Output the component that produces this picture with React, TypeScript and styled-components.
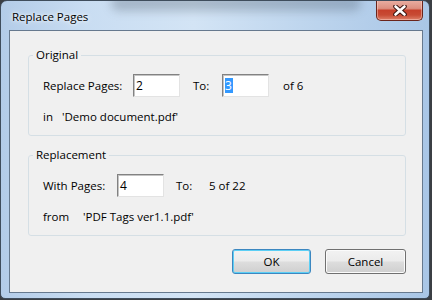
import React from "react";
import styled, { createGlobalStyle } from "styled-components";

const Global = createGlobalStyle`
  html, body { margin: 0; padding: 0; }
  body {
    background: #3b3f44;
    font-family: "Open Sans", "Noto Sans", sans-serif;
    font-size: 11px;
    color: #000;
  }
`;

const Window = styled.div`
  position: relative;
  box-sizing: border-box;
  width: 430px;
  height: 299px;
  border: 1px solid #3f4d5c;
  border-radius: 7px 7px 5px 5px;
  overflow: hidden;
  background: linear-gradient(
    to right,
    #b3cce8 0%,
    #c9ddf2 20%,
    #d3e4f5 45%,
    #bfd6ee 70%,
    #a9c6e6 100%
  );
  padding: 0 6px 5px 8px;
  display: flex;
  flex-direction: column;
`;

const GlassShade = styled.div`
  position: absolute;
  left: 110px;
  top: -6px;
  width: 250px;
  height: 16px;
  border-radius: 8px;
  background: rgba(60, 74, 90, 0.28);
  filter: blur(5px);
  pointer-events: none;
`;

const TitleBar = styled.div`
  position: relative;
  height: 29px;
  display: flex;
  align-items: flex-start;
`;

const TitleText = styled.div`
  margin: 9px 0 0 3px;
  font-size: 11.5px;
  line-height: 14px;
  color: #000;
  text-shadow: 0 0 6px rgba(255, 255, 255, 0.9), 0 0 3px rgba(255, 255, 255, 0.9);
`;

const CloseButton = styled.div`
  margin-left: auto;
  margin-top: -1px;
  box-sizing: border-box;
  width: 47px;
  height: 21px;
  border: 1px solid #6a241b;
  border-top: none;
  border-radius: 0 0 5px 5px;
  background: linear-gradient(
    #eab0a4 0%,
    #dc8f80 42%,
    #c6402b 52%,
    #c84b34 75%,
    #de8069 100%
  );
  box-shadow: inset 0 0 0 1px rgba(255, 220, 210, 0.45);
  display: flex;
  align-items: center;
  justify-content: center;
`;

const Client = styled.div`
  flex: 1;
  border: 1px solid #66798e;
  background: #f0f0f0;
  padding: 16px 0 0 18px;
  display: flex;
  flex-direction: column;
`;

const Group = styled.fieldset<{ $gap?: number }>`
  box-sizing: border-box;
  width: 378px;
  margin: ${(p) => p.$gap ?? 0}px 0 0 0;
  padding: 0;
  min-width: 0;
  border: 1px solid #d5dfe5;
  border-radius: 3px;
`;

const Legend = styled.legend`
  padding: 0 3px;
  margin-left: 4px;
  font-size: 11.5px;
  line-height: 16px;
  color: #000;
`;

const GroupBody = styled.div`
  padding: 11px 0 10px 14px;
`;

const FieldRow = styled.div`
  display: flex;
  align-items: center;
  height: 23px;
`;

const InfoRow = styled.div`
  display: flex;
  align-items: center;
  margin-top: 12px;
  line-height: 16px;
  height: 16px;
`;

const Label = styled.span<{ $w: number }>`
  width: ${(p) => p.$w}px;
  flex: none;
  font-size: 11.5px;
  white-space: nowrap;
`;

const Text = styled.span`
  font-size: 11.5px;
  white-space: nowrap;
`;

const Field = styled.div<{ $after: number }>`
  box-sizing: border-box;
  width: 47px;
  height: 23px;
  flex: none;
  margin-right: ${(p) => p.$after}px;
  background: #fff;
  border: 1px solid;
  border-color: #828282 #e3e3e3 #e3e3e3 #828282;
  box-shadow: inset 1px 1px 0 #c4c4c4;
  padding: 0 0 0 2px;
  display: flex;
  align-items: center;
  font-size: 12px;
`;

const Selected = styled.span`
  background: #3399ff;
  color: #fff;
  line-height: 15px;
  padding: 0 1px 0 0;
`;

const ButtonRow = styled.div`
  width: 378px;
  display: flex;
  justify-content: flex-end;
  gap: 14px;
  margin-top: 13px;
`;

const Button = styled.button<{ $default?: boolean }>`
  box-sizing: border-box;
  width: ${(p) => (p.$default ? 79 : 81)}px;
  height: 25px;
  padding: 0;
  border-radius: 3px;
  border: 1px solid ${(p) => (p.$default ? "#3c87c0" : "#707070")};
  box-shadow: inset 0 0 0 1px ${(p) => (p.$default ? "#5ccff5" : "#fbfbfb")};
  background: linear-gradient(#f2f2f2 0%, #ebebeb 48%, #dddddd 52%, #cfcfcf 100%);
  font-family: "Open Sans", "Noto Sans", sans-serif;
  font-size: 11.5px;
  color: #000;
`;

const CloseIcon = () => (
  <svg width="14" height="11" viewBox="0 0 14 11">
    <path d="M2.5 1.5 L11.5 9.5 M11.5 1.5 L2.5 9.5" stroke="#3a1410" strokeWidth="4.6" strokeLinecap="round" />
    <path d="M2.5 1.5 L11.5 9.5 M11.5 1.5 L2.5 9.5" stroke="#ffffff" strokeWidth="2.6" strokeLinecap="round" />
  </svg>
);

export default function App() {
  return (
    <>
      <Global />
      <Window>
        <GlassShade aria-hidden="true" />
        <TitleBar>
          <TitleText>Replace Pages</TitleText>
          <CloseButton>
            <CloseIcon />
          </CloseButton>
        </TitleBar>
        <Client>
          <Group>
            <Legend>Original</Legend>
            <GroupBody>
              <FieldRow>
                <Label $w={90}>Replace Pages:</Label>
                <Field $after={13}>2</Field>
                <Label $w={29}>To:</Label>
                <Field $after={14}>
                  <Selected>3</Selected>
                </Field>
                <Text>of 6</Text>
              </FieldRow>
              <InfoRow>
                <Label $w={19}>in</Label>
                <Text>'Demo document.pdf'</Text>
              </InfoRow>
            </GroupBody>
          </Group>
          <Group $gap={11}>
            <Legend>Replacement</Legend>
            <GroupBody>
              <FieldRow>
                <Label $w={74}>With Pages:</Label>
                <Field $after={12}>4</Field>
                <Label $w={33}>To:</Label>
                <Text>5 of 22</Text>
              </FieldRow>
              <InfoRow>
                <Label $w={40}>from</Label>
                <Text>'PDF Tags ver1.1.pdf'</Text>
              </InfoRow>
            </GroupBody>
          </Group>
          <ButtonRow>
            <Button $default>OK</Button>
            <Button>Cancel</Button>
          </ButtonRow>
        </Client>
      </Window>
    </>
  );
}
